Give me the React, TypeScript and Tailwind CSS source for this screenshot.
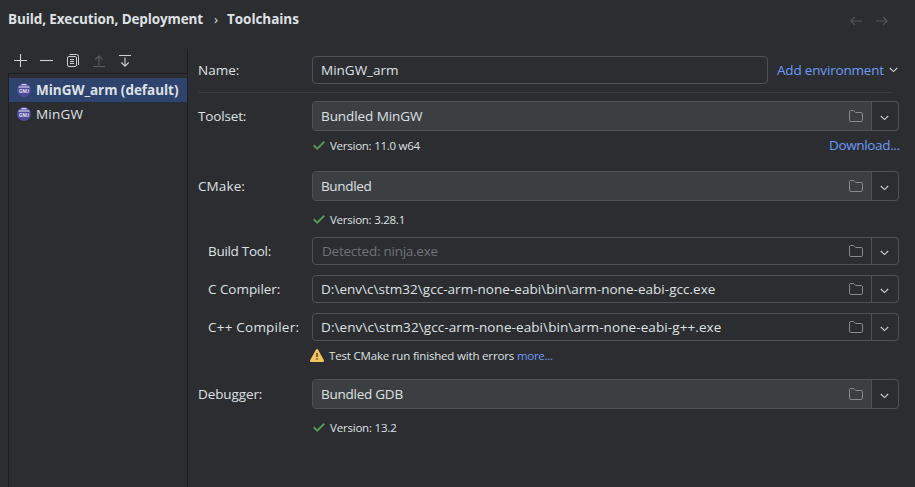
import type { ReactNode } from "react";

function PlusIcon() {
  return (
    <svg width="14" height="14" viewBox="0 0 14 14" fill="none" stroke="#ced0d6" strokeWidth="1.1">
      <path d="M6.5 0v13M0 6.5h13" />
    </svg>
  );
}

function MinusIcon() {
  return (
    <svg width="14" height="14" viewBox="0 0 14 14" fill="none" stroke="#ced0d6" strokeWidth="1.1">
      <path d="M0 6.5h13" />
    </svg>
  );
}

function CopyIcon() {
  return (
    <svg width="14" height="14" viewBox="0 0 14 14" fill="none" stroke="#ced0d6">
      <rect x="0.5" y="2.5" width="9" height="10" rx="1.5" />
      <path d="M2.5 0.5H9.5a2 2 0 0 1 2 2v8.5M3 5.5h4M3 7.5h4M3 9.5h4" />
    </svg>
  );
}

function MoveUpIcon() {
  return (
    <svg width="12" height="13" viewBox="0 0 12 13" fill="none" stroke="#5a5d63" strokeWidth="1.1">
      <path d="M6 10V1M2.3 4.7 6 1l3.7 3.7M0 11.5h12" />
    </svg>
  );
}

function MoveDownIcon() {
  return (
    <svg width="12" height="13" viewBox="0 0 12 13" fill="none" stroke="#ced0d6" strokeWidth="1.1">
      <path d="M6 2.5v8.7M2.3 7.5 6 11.2l3.7-3.7M0 0.5h12" />
    </svg>
  );
}

function GnuIcon() {
  return (
    <svg className="shrink-0" width="14" height="14" viewBox="0 0 14 14">
      <circle cx="7" cy="7" r="7" fill="#4f4a9e" />
      <path d="M3.3 2.2Q7-.4 10.7 2.2ZM1.8 3.4h10.4l.5 1.2H1.3z" fill="#eeeef6" />
      <text x="7" y="9.7" textAnchor="middle" fontSize="4.6" fontWeight="700" fill="#eeeef6" textLength="10" lengthAdjust="spacingAndGlyphs" fontFamily="Liberation Sans, sans-serif">
        GNU
      </text>
    </svg>
  );
}

function FolderIcon() {
  return (
    <svg width="14" height="12" viewBox="0 0 14 12" fill="none" stroke="#868a91" strokeWidth="1">
      <path d="M.5 1.8A1.3 1.3 0 0 1 1.8.5h2.9l1.9 2h5.6a1.3 1.3 0 0 1 1.3 1.3v6.4a1.3 1.3 0 0 1-1.3 1.3H1.8a1.3 1.3 0 0 1-1.3-1.3z" />
    </svg>
  );
}

function Chevron() {
  return (
    <svg width="9" height="6" viewBox="0 0 9 6" fill="none" stroke="#ced0d6" strokeWidth="1.1">
      <path d="M.8 1l3.7 3.6L8.2 1" />
    </svg>
  );
}

function Check() {
  return (
    <svg className="-mt-px" width="12" height="9" viewBox="0 0 12 9" fill="none" stroke="#57965c" strokeWidth="1.9">
      <path d="M.7 4.3l3.5 3.3L11.3.7" />
    </svg>
  );
}

function Warning() {
  return (
    <svg className="-mt-px" width="14" height="13" viewBox="0 0 14 13">
      <path d="M5.9.7a1.25 1.25 0 0 1 2.2 0l5.7 10.4A1.25 1.25 0 0 1 12.7 13H1.3A1.25 1.25 0 0 1 .2 11.1z" fill="#f2c55c" />
      <path d="M6.2 4h1.6v4H6.2zM6.2 9.2h1.6v1.6H6.2z" fill="#5e4d33" />
    </svg>
  );
}

function NavArrow({ flip }: { flip?: boolean }) {
  return (
    <svg className={flip ? "rotate-180" : ""} width="12" height="10" viewBox="0 0 12 10" fill="none" stroke="#54565b" strokeWidth="1.2">
      <path d="M12 5H1M5 .8.8 5 5 9.2" />
    </svg>
  );
}

function Row({ label, className, spacing, children }: { label: string; className?: string; spacing?: string; children: ReactNode }) {
  return (
    <div className={`flex items-center ${className ?? ""}`}>
      <span className={`w-[114px] shrink-0 ${spacing ?? ""}`}>{label}</span>
      {children}
    </div>
  );
}

function Combo({ value, filled, hint, spacing }: { value: string; filled?: boolean; hint?: boolean; spacing?: string }) {
  return (
    <div className={`flex w-[587px] overflow-hidden rounded-[4px] border border-[#4e5157] ${filled ? "h-[30px]" : "h-7"}`}>
      <div className={`flex flex-1 items-center justify-between border-r border-[#4e5157] pr-2 ${hint ? "pl-[9px]" : "pl-2"} ${filled ? "bg-[#3c3f41]" : ""}`}>
        <span className={`${spacing ?? ""} ${hint ? "text-[#6f737a]" : ""}`}>{value}</span>
        <FolderIcon />
      </div>
      <div className="flex w-[26px] items-center justify-center pt-[3px] pr-px">
        <Chevron />
      </div>
    </div>
  );
}

function Version({ children, className }: { children: ReactNode; className?: string }) {
  return (
    <div className={`flex h-5 items-center gap-[5px] pl-[115px] text-[11.5px] ${className ?? ""}`}>
      <Check />
      {children}
    </div>
  );
}

export default function App() {
  return (
    <div className="flex h-[487px] w-[915px] flex-col overflow-hidden whitespace-nowrap bg-[#2b2d30] font-['Open_Sans',sans-serif] text-[13.5px] leading-[18px] text-[#dfe1e5]">
      <header className="flex h-[49px] items-start pt-2.5 pl-2 font-bold">
        <span className="w-[206px] tracking-[-0.12px]">Build, Execution, Deployment</span>
        <span className="w-[13px] font-normal">›</span>
        <span className="tracking-[-0.05px]">Toolchains</span>
        <div className="mr-[27px] ml-auto flex gap-[14px] pt-1.5">
          <NavArrow />
          <NavArrow flip />
        </div>
      </header>

      <div className="flex flex-1">
        <aside className="flex w-[188px] flex-col border-r border-[#1e1f22] pl-2">
          <div className="flex h-6 items-start pl-1.5">
            <div className="w-[26px] pt-[5px]"><PlusIcon /></div>
            <div className="w-[27px] pt-[5px]"><MinusIcon /></div>
            <div className="w-[26px] pt-[5px]"><CopyIcon /></div>
            <div className="w-[26px] pt-1.5"><MoveUpIcon /></div>
            <div className="pt-1.5"><MoveDownIcon /></div>
          </div>
          <div className="flex-1 border-t border-l border-[#1e1f22] pt-1">
            <div className="flex h-6 items-center gap-[5px] bg-[#2e436e] pl-2 font-bold">
              <GnuIcon />
              <span className="tracking-[-0.03px]">MinGW_arm (default)</span>
            </div>
            <div className="flex h-6 items-center gap-[5px] pl-2">
              <GnuIcon />
              <span className="tracking-[0.2px]">MinGW</span>
            </div>
          </div>
        </aside>

        <main className="flex flex-col pt-[7px] pl-[10px]">
          <Row label="Name:">
            <div className="flex h-7 w-[456px] items-center rounded-[4px] border border-[#4e5157] pl-2">MinGW_arm</div>
            <div className="flex items-center gap-[5px] pl-[9px] text-[#6b9bfa]">
              <span className="w-[107px] tracking-[-0.18px]">Add environment</span>
              <Chevron />
            </div>
          </Row>
          <div className="mt-2 h-px w-[694px] bg-[#393b40]" />
          <Row label="Toolset:" className="mt-2" spacing="tracking-[-0.15px]">
            <Combo value="Bundled MinGW" filled spacing="tracking-[-0.08px]" />
          </Row>
          <div className="mt-[5px] flex items-center justify-between">
            <Version><span className="tracking-[-0.25px]">Version: 11.0 w64</span></Version>
            <span className="-mt-[2px] w-[70px] tracking-[-0.35px] text-[#6b9bfa]">Download...</span>
          </div>
          <Row label="CMake:" className="mt-[15px]" spacing="tracking-[0.1px]">
            <Combo value="Bundled" filled spacing="tracking-[-0.35px]" />
          </Row>
          <Version className="mt-[9px]"><span className="tracking-[-0.25px]">Version: 3.28.1</span></Version>
          <Row label="Build Tool:" className="mt-[7px] [&>span]:pl-[10px]" spacing="tracking-[-0.3px]">
            <Combo value="Detected: ninja.exe" hint spacing="tracking-[-0.25px]" />
          </Row>
          <Row label="C Compiler:" className="mt-2.5 [&>span]:pl-[10px]" spacing="tracking-[-0.05px]">
            <Combo value="D:\env\c\stm32\gcc-arm-none-eabi\bin\arm-none-eabi-gcc.exe" spacing="tracking-[0.03px]" />
          </Row>
          <Row label="C++ Compiler:" className="mt-2.5 [&>span]:pl-[10px]" spacing="tracking-[0.22px]">
            <Combo value="D:\env\c\stm32\gcc-arm-none-eabi\bin\arm-none-eabi-g++.exe" spacing="tracking-[0.09px]" />
          </Row>
          <div className="mt-[5px] flex h-5 items-center pl-[112px] text-[11.5px] tracking-[-0.18px]">
            <Warning />
            <span className="pl-[5px]">Test CMake run finished with errors</span>
            <span className="pl-[3px] tracking-[-0.3px] text-[#6b9bfa]">more...</span>
          </div>
          <Row label="Debugger:" className="mt-[13px]" spacing="tracking-[-0.1px]">
            <Combo value="Bundled GDB" filled spacing="tracking-[-0.25px]" />
          </Row>
          <Version className="mt-[9px]"><span className="tracking-[-0.2px]">Version: 13.2</span></Version>
        </main>
      </div>
    </div>
  );
}
